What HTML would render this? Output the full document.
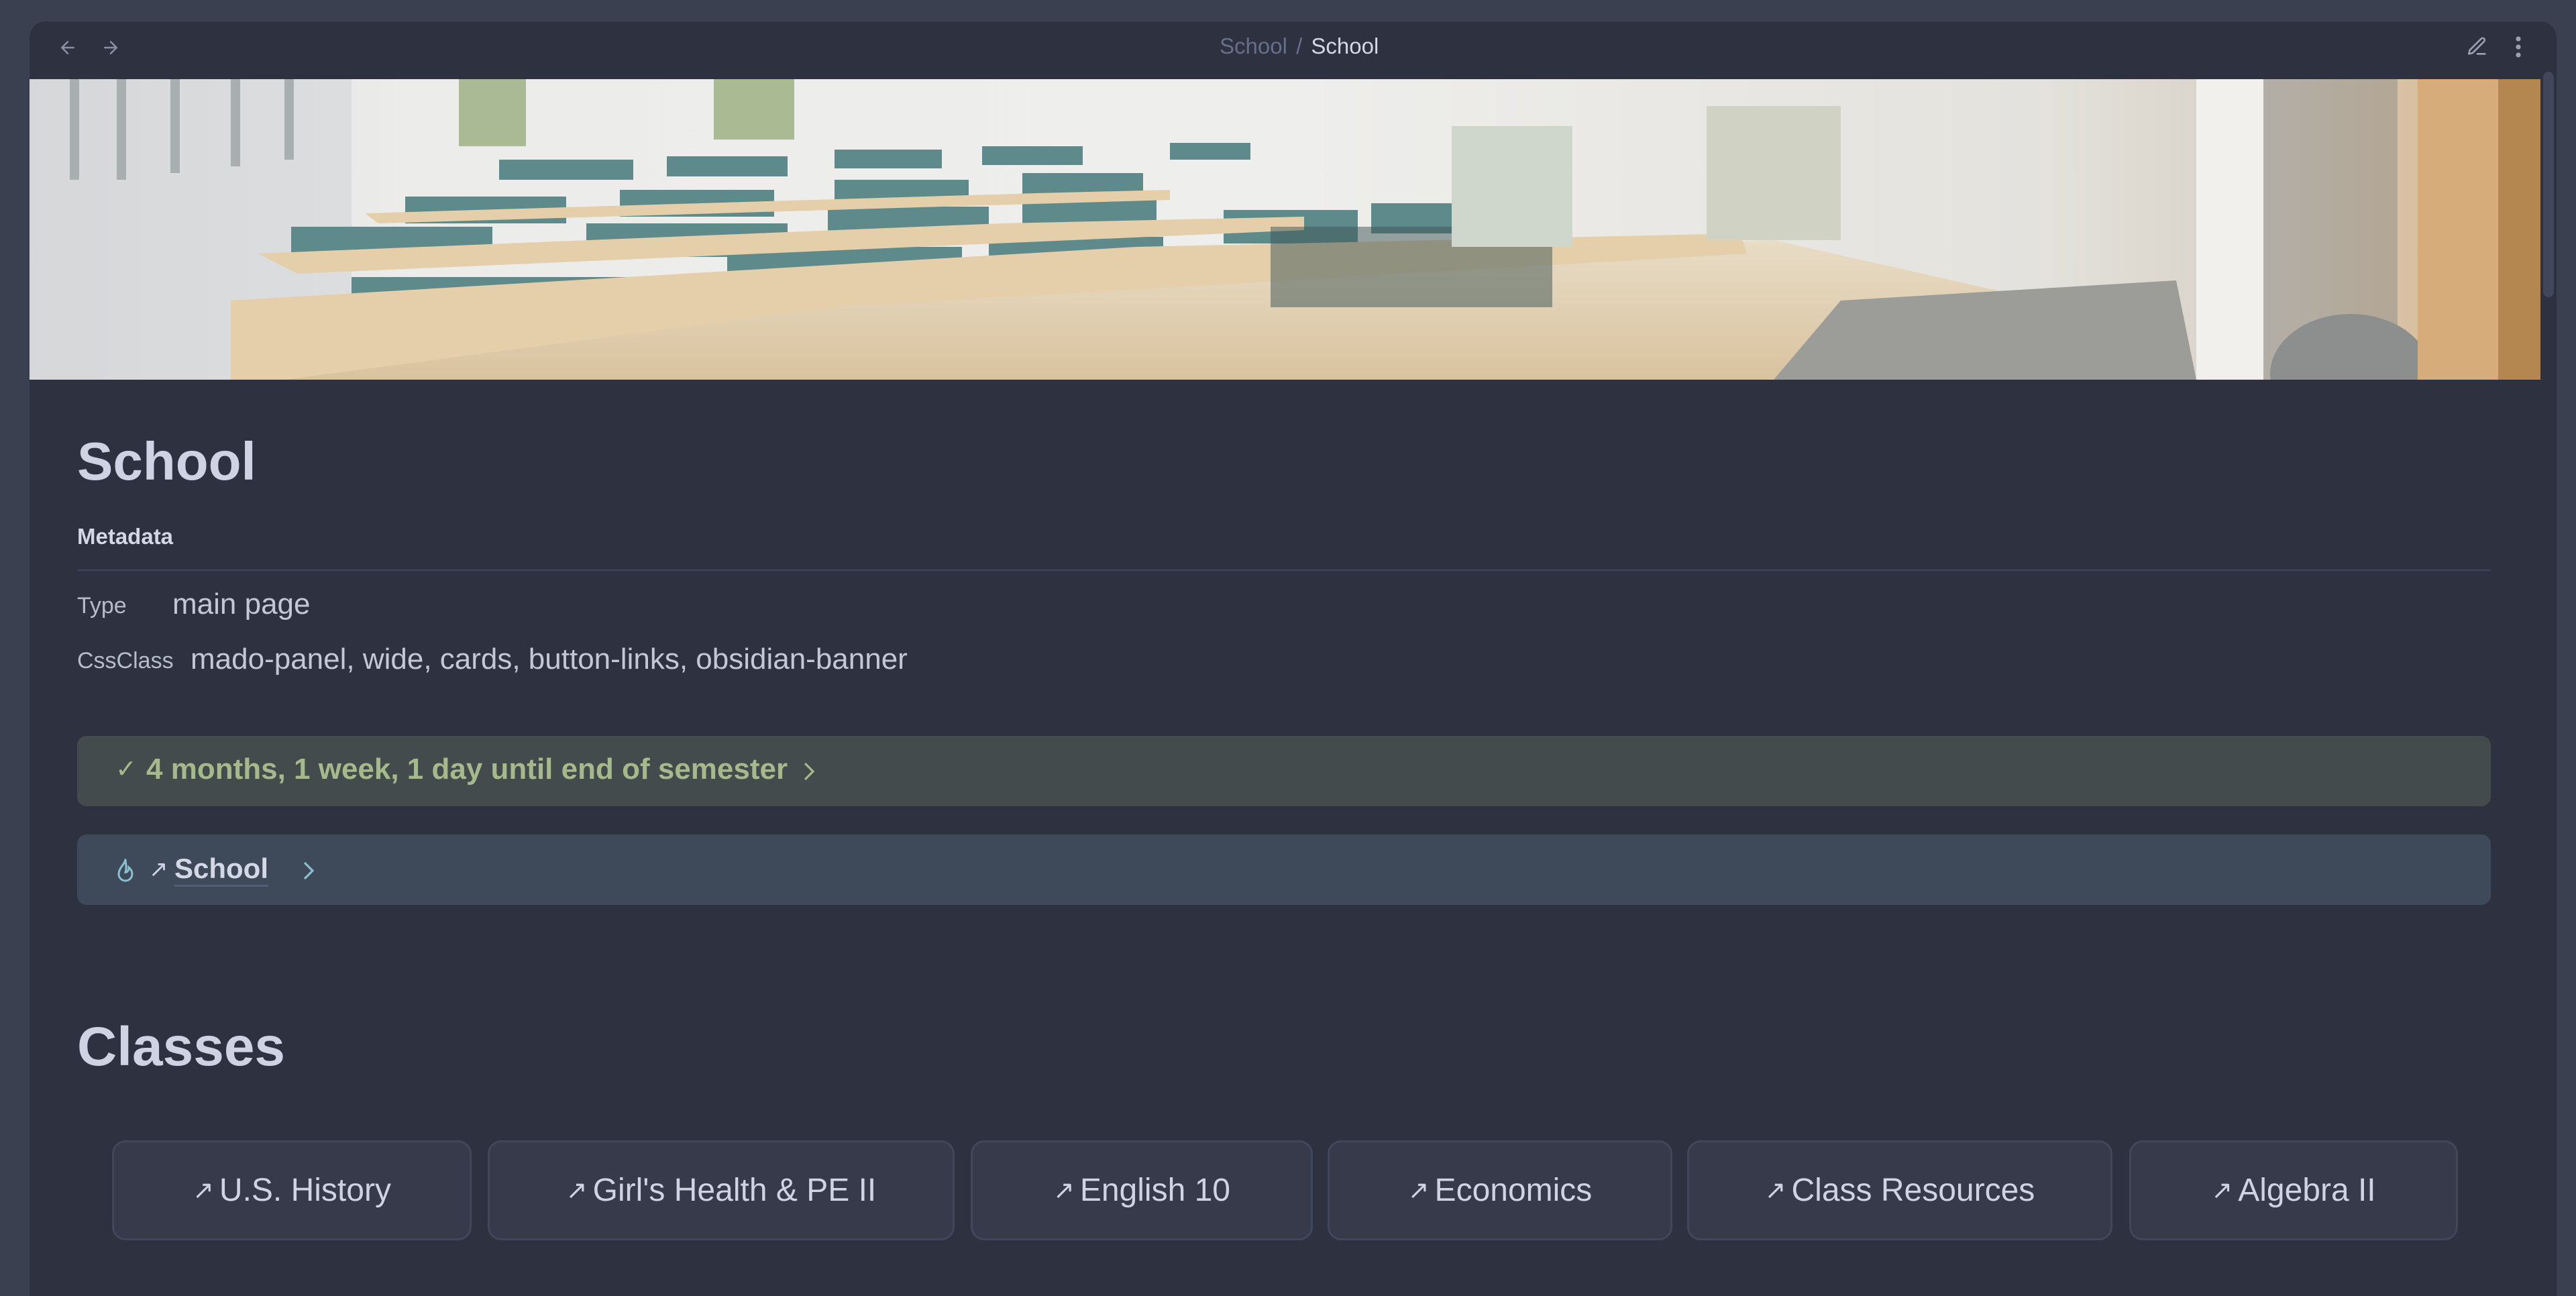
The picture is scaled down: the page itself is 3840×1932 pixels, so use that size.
<!DOCTYPE html>
<html><head><meta charset="utf-8"><style>
*{margin:0;padding:0;box-sizing:border-box}
body{width:3840px;height:1926px;background:#3b4051;font-family:"Liberation Sans",sans-serif;overflow:hidden;position:relative}
.panel{position:absolute;left:44px;top:32px;width:3767px;height:1900px;background:#2e3240;border-radius:24px 24px 0 0;overflow:hidden}
.abs{position:absolute}
.crumb{position:absolute;top:50px;left:1818px;font-size:33px;color:#66708a;white-space:nowrap}
.crumb b{font-weight:normal;color:#d4d8e6}
.txt{position:absolute;color:#cdd1e0;white-space:nowrap}
.callout{position:absolute;left:115px;width:3598px;height:105px;border-radius:14px}
.btn{position:absolute;top:1700px;height:149px;background:#363a4a;border:3px solid #41465a;border-radius:20px;color:#d0d3e2;font-size:48px;display:flex;align-items:center;justify-content:center;white-space:nowrap}
.btn span.ar{font-size:38px;margin-right:8px}
</style></head><body>
<div class="panel"></div>
<svg class="abs" style="left:86px;top:56px" width="30" height="30" viewBox="0 0 24 24" fill="none" stroke="#8a90a3" stroke-width="2" stroke-linecap="round" stroke-linejoin="round"><path d="M19 12H5M12 19l-7-7 7-7"/></svg>
<svg class="abs" style="left:150px;top:56px" width="30" height="30" viewBox="0 0 24 24" fill="none" stroke="#8a90a3" stroke-width="2" stroke-linecap="round" stroke-linejoin="round"><path d="M5 12h14M12 5l7 7-7 7"/></svg>
<div class="crumb">School <span style="margin:0 4px">/</span> <b>School</b></div>
<svg class="abs" style="left:3676px;top:52px" width="34" height="34" viewBox="0 0 24 24" fill="none" stroke="#9ba1b3" stroke-width="1.8" stroke-linecap="round" stroke-linejoin="round"><path d="M3 20l1-4L16 4a2 2 0 0 1 3 3L7 19z"/><path d="M12 20h8"/></svg>
<svg class="abs" style="left:3744px;top:50px" width="20" height="40" viewBox="0 0 10 20" fill="#9ba1b3"><circle cx="5" cy="4" r="1.8"/><circle cx="5" cy="10" r="1.8"/><circle cx="5" cy="16" r="1.8"/></svg>
<div class="abs" style="left:3791px;top:107px;width:16px;height:336px;background:#41465a;border-radius:8px"></div>
<svg class="abs" style="left:44px;top:118px" width="3743" height="448" viewBox="0 0 3743 448" preserveAspectRatio="none">
<defs>
<linearGradient id="bg" x1="0" y1="0" x2="1" y2="0"><stop offset="0" stop-color="#d8dadb"/><stop offset="0.15" stop-color="#ececea"/><stop offset="0.5" stop-color="#eeeeec"/><stop offset="0.8" stop-color="#e4e2dd"/><stop offset="0.9" stop-color="#d6cfc3"/><stop offset="1" stop-color="#d9b07e"/></linearGradient>
<linearGradient id="fl" x1="0" y1="0" x2="0" y2="1"><stop offset="0" stop-color="#e8dcc6"/><stop offset="1" stop-color="#d9c39f"/></linearGradient>
</defs>
<rect width="3743" height="448" fill="url(#bg)"/>
<rect x="0" y="0" width="480" height="448" fill="#d4d6d8" opacity=".6"/>
<g fill="#a9aeb1"><rect x="60" y="0" width="14" height="150"/><rect x="130" y="0" width="14" height="150"/><rect x="210" y="0" width="14" height="140"/><rect x="300" y="0" width="14" height="130"/><rect x="380" y="0" width="14" height="120"/></g>
<rect x="640" y="0" width="100" height="100" fill="#7d9a5a" opacity=".6"/>
<rect x="1020" y="0" width="120" height="90" fill="#7d9a5a" opacity=".6"/>
<polygon points="300,448 300,330 2600,240 3000,330 3000,448" fill="url(#fl)"/>
<polygon points="2700,330 3200,300 3230,448 2600,448" fill="#9c9c98"/>
<g fill="#5f8a8c">
<rect x="480" y="295" width="420" height="80"/><rect x="1040" y="250" width="350" height="65"/><rect x="1430" y="235" width="260" height="60"/><rect x="1780" y="195" width="200" height="50"/><rect x="2000" y="185" width="180" height="45"/>
<rect x="390" y="220" width="300" height="50"/><rect x="830" y="215" width="300" height="50"/><rect x="1190" y="190" width="240" height="45"/><rect x="1480" y="180" width="200" height="40"/>
<rect x="560" y="175" width="240" height="40"/><rect x="880" y="165" width="230" height="40"/><rect x="1200" y="150" width="200" height="35"/><rect x="1480" y="140" width="180" height="35"/>
<rect x="700" y="120" width="200" height="30"/><rect x="950" y="115" width="180" height="30"/><rect x="1200" y="105" width="160" height="28"/><rect x="1420" y="100" width="150" height="28"/><rect x="1700" y="95" width="120" height="25"/>
</g>
<g fill="#e4cfaa">
<polygon points="300,330 1650,250 2550,230 2560,260 1200,340 380,448 300,448"/>
<polygon points="340,260 1450,215 1900,205 1900,225 400,290"/>
<polygon points="500,200 1500,170 1700,165 1700,180 520,215"/>
</g>
<rect x="1850" y="220" width="420" height="120" fill="#3b5354" opacity=".5"/>
<rect x="2120" y="70" width="180" height="180" fill="#cfd6cc"/><rect x="2500" y="40" width="200" height="200" fill="#d0d2c4"/>
<rect x="3230" y="0" width="100" height="448" fill="#f1f0ec"/>
<rect x="3330" y="0" width="200" height="448" fill="#8f8c85" opacity=".5"/>
<ellipse cx="3460" cy="440" rx="120" ry="90" fill="#8d8f8f"/>
<rect x="3560" y="0" width="120" height="448" fill="#d6ad7a"/>
<rect x="3680" y="0" width="63" height="448" fill="#b48650"/>
</svg>
<div class="txt" style="left:115px;top:642px;font-size:80px;font-weight:bold;color:#cfd2e2">School</div>
<div class="txt" style="left:115px;top:781px;font-size:33px;font-weight:bold;color:#d4d7e4">Metadata</div>
<div class="abs" style="left:115px;top:849px;width:3598px;height:2px;background:#41465a"></div>
<div class="txt" style="left:115px;top:884px;font-size:34px;color:#b7bccb">Type</div>
<div class="txt" style="left:257px;top:876px;font-size:44px;color:#c3c7d6">main page</div>
<div class="txt" style="left:115px;top:966px;font-size:34px;color:#b7bccb">CssClass</div>
<div class="txt" style="left:284px;top:958px;font-size:44px;color:#c3c7d6">mado-panel, wide, cards, button-links, obsidian-banner</div>
<div class="callout" style="top:1097px;background:#434b4d"></div>
<div class="txt" style="left:172px;top:1124px;font-size:38px;color:#a6b98b">✓</div>
<div class="txt" style="left:218px;top:1122px;font-size:44px;font-weight:bold;color:#a6b98b">4 months, 1 week, 1 day until end of semester</div>
<svg class="abs" style="left:1194px;top:1132px" width="24" height="36" viewBox="0 0 12 18" fill="none" stroke="#a6b98b" stroke-width="1.6"><path d="M3 3l6 6-6 6"/></svg>
<div class="callout" style="top:1244px;background:#3e4a59"></div>
<svg class="abs" style="left:172px;top:1278px" width="30" height="40" viewBox="0 0 12 16" fill="none" stroke="#88c0d0" stroke-width="1.2"><path d="M6 1c0 3-4 5-4 9a4 4 0 0 0 8 0c0-2-1-3-2-4 0 2-1 3-2 3 1-3 0-6 0-8z"/></svg>
<div class="txt" style="left:222px;top:1276px;font-size:34px;color:#cdd1e0">↗</div>
<div class="txt" style="left:260px;top:1271px;font-size:42px;font-weight:bold;color:#d4d7e4;border-bottom:3px solid #565d72;line-height:48px">School</div>
<svg class="abs" style="left:448px;top:1280px" width="24" height="36" viewBox="0 0 12 18" fill="none" stroke="#88c0d0" stroke-width="1.6"><path d="M3 3l6 6-6 6"/></svg>
<div class="txt" style="left:115px;top:1514px;font-size:82px;font-weight:bold;color:#cfd2e2">Classes</div>
<div class="btn" style="left:167px;width:536px"><span class="ar">↗</span>U.S. History</div>
<div class="btn" style="left:727px;width:696px"><span class="ar">↗</span>Girl's Health &amp; PE II</div>
<div class="btn" style="left:1447px;width:510px"><span class="ar">↗</span>English 10</div>
<div class="btn" style="left:1979px;width:514px"><span class="ar">↗</span>Economics</div>
<div class="btn" style="left:2515px;width:634px"><span class="ar">↗</span>Class Resources</div>
<div class="btn" style="left:3174px;width:490px"><span class="ar">↗</span>Algebra II</div>
</body></html>
